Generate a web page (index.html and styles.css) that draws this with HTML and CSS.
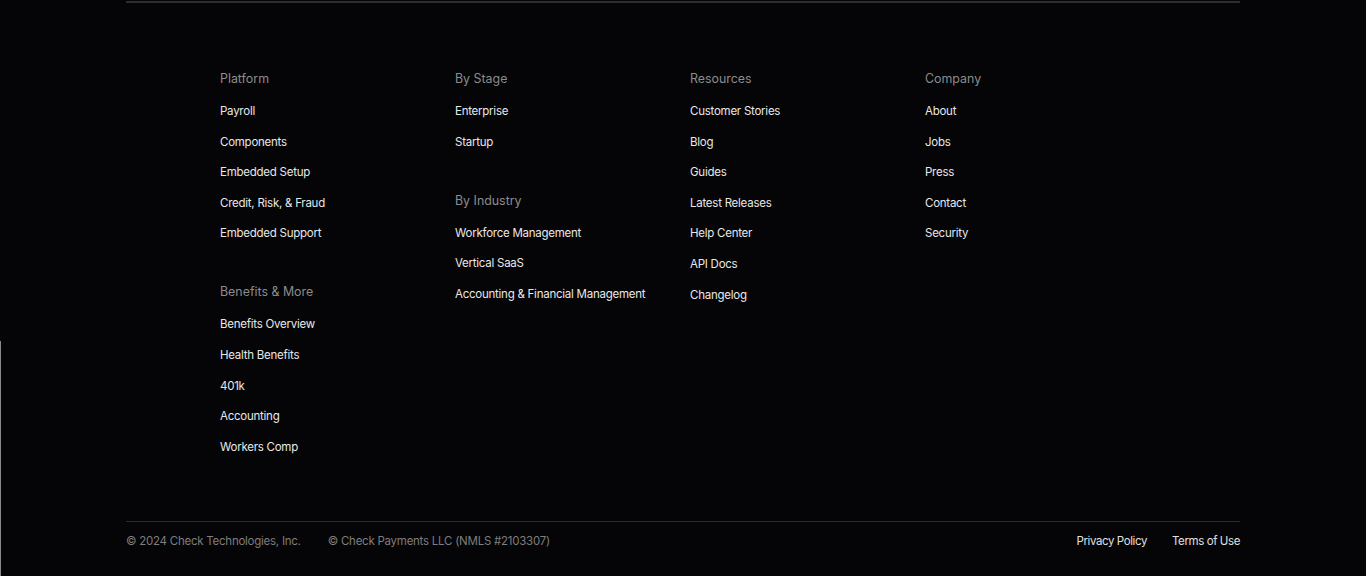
FILE: index.html
```html
<!DOCTYPE html>
<html lang="en">
<head>
  <meta charset="UTF-8">
  <meta name="viewport" content="width=device-width, initial-scale=1.0">
  <title>Check - Footer</title>
  <link rel="stylesheet" href="styles.css">
</head>
<body>
  <div class="edge"></div>
  <footer class="footer">
    <div class="columns">
      <div class="col">
        <div class="group">
          <h4>Platform</h4>
          <ul>
            <li><a href="#">Payroll</a></li>
            <li><a href="#">Components</a></li>
            <li><a href="#">Embedded Setup</a></li>
            <li><a href="#">Credit, Risk, &amp; Fraud</a></li>
            <li><a href="#">Embedded Support</a></li>
          </ul>
        </div>
        <div class="group">
          <h4>Benefits &amp; More</h4>
          <ul>
            <li><a href="#">Benefits Overview</a></li>
            <li><a href="#">Health Benefits</a></li>
            <li><a href="#">401k</a></li>
            <li><a href="#">Accounting</a></li>
            <li><a href="#">Workers Comp</a></li>
          </ul>
        </div>
      </div>
      <div class="col">
        <div class="group">
          <h4>By Stage</h4>
          <ul>
            <li><a href="#">Enterprise</a></li>
            <li><a href="#">Startup</a></li>
          </ul>
        </div>
        <div class="group">
          <h4>By Industry</h4>
          <ul>
            <li><a href="#">Workforce Management</a></li>
            <li><a href="#">Vertical SaaS</a></li>
            <li><a href="#">Accounting &amp; Financial Management</a></li>
          </ul>
        </div>
      </div>
      <div class="col">
        <div class="group">
          <h4>Resources</h4>
          <ul>
            <li><a href="#">Customer Stories</a></li>
            <li><a href="#">Blog</a></li>
            <li><a href="#">Guides</a></li>
            <li><a href="#">Latest Releases</a></li>
            <li><a href="#">Help Center</a></li>
            <li><a href="#">API Docs</a></li>
            <li><a href="#">Changelog</a></li>
          </ul>
        </div>
      </div>
      <div class="col">
        <div class="group">
          <h4>Company</h4>
          <ul>
            <li><a href="#">About</a></li>
            <li><a href="#">Jobs</a></li>
            <li><a href="#">Press</a></li>
            <li><a href="#">Contact</a></li>
            <li><a href="#">Security</a></li>
          </ul>
        </div>
      </div>
    </div>
    <div class="bottom">
      <div class="legal">
        <span>&copy; 2024 Check Technologies, Inc.</span>
        <span>&copy; Check Payments LLC (NMLS #2103307)</span>
      </div>
      <div class="policies">
        <a href="#">Privacy Policy</a>
        <a href="#">Terms of Use</a>
      </div>
    </div>
  </footer>
</body>
</html>
```

FILE: styles.css
```css
body {
  font-family: Inter, 'Noto Sans', sans-serif;
  background-color: #050406;
  color: #e6e6e6;
  margin: 0;
  height: 576px;
  overflow: hidden;
}
a {
  color: inherit;
  text-decoration: none;
}
.edge {
  position: fixed;
  left: 0;
  top: 341px;
  bottom: 0;
  width: 1px;
  background-color: #8a8a8a;
}
.footer {
  width: 1114px;
  margin: 1px auto 0;
  border-top: 2px solid #2c2c2e;
}
.columns {
  display: grid;
  grid-template-columns: repeat(4, 235px);
  padding: 68px 0 66px 94px;
}
.group + .group {
  margin-top: 43px;
}
h4 {
  margin: 0 0 16px;
  font-size: 12.4px;
  line-height: 16px;
  font-weight: 400;
  color: #8c8c8c;
}
ul {
  list-style: none;
  margin: 0;
  padding: 0;
  display: flex;
  flex-direction: column;
  gap: 14.6px;
}
li {
  font-size: 11.5px;
  letter-spacing: -0.25px;
  line-height: 16px;
  color: #e8e8e8;
}
.bottom {
  display: flex;
  justify-content: space-between;
  border-top: 1px solid #2a2a2c;
  padding-top: 11px;
  font-size: 11.5px;
  letter-spacing: -0.25px;
  line-height: 16px;
}
.legal {
  display: flex;
  gap: 27px;
  color: #7e7e7e;
}
.policies {
  display: flex;
  gap: 25px;
  letter-spacing: -0.4px;
  color: #e0e0e0;
}
```
